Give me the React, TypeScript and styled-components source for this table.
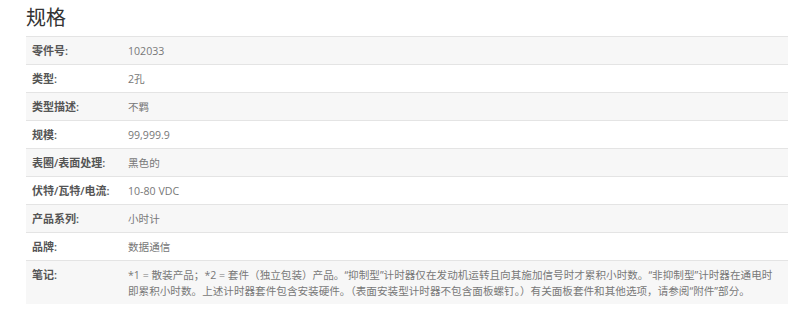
import React from 'react'
import styled, { createGlobalStyle } from 'styled-components'

const GlobalStyle = createGlobalStyle`
	body {
		margin: 0;
		background: #ffffff;
		font-family: 'Open Sans', 'Noto Sans CJK SC', sans-serif;
	}
`

const specs: [string, string][] = [
	['零件号:', '102033'],
	['类型:', '2孔'],
	['类型描述:', '不羁'],
	['规模:', '99,999.9'],
	['表圈/表面处理:', '黑色的'],
	['伏特/瓦特/电流:', '10-80 VDC'],
	['产品系列:', '小时计'],
	['品牌:', '数据通信'],
	[
		'笔记:',
		'*1 = 散装产品；*2 = 套件（独立包装）产品。“抑制型”计时器仅在发动机运转且向其施加信号时才累积小时数。“非抑制型”计时器在通电时即累积小时数。上述计时器套件包含安装硬件。（表面安装型计时器不包含面板螺钉。）有关面板套件和其他选项，请参阅“附件”部分。',
	],
]

const App = () => {
	return (
		<Root>
			<GlobalStyle />
			<Title>规格</Title>
			<SpecTable>
				<tbody>
					{specs.map(([label, value], i) => (
						<SpecRow key={label} striped={i % 2 === 0}>
							<LabelCell>{label}</LabelCell>
							<ValueCell>{value}</ValueCell>
						</SpecRow>
					))}
				</tbody>
			</SpecTable>
		</Root>
	)
}

export default App

const Root = styled.section`
	padding: 6px 12px 0 26px;
`

const Title = styled.h2`
	margin: 0 0 7px;
	font-weight: 400;
	font-size: 20px;
	line-height: 23px;
	color: #333333;
`

const SpecTable = styled.table`
	width: 762px;
	border-collapse: collapse;
	border-spacing: 0;
`

const SpecRow = styled.tr.withConfig({ shouldForwardProp: p => p !== 'striped' })<{ striped: boolean }>`
	background: ${p => (p.striped ? '#f7f7f7' : '#ffffff')};
	border-top: 1px solid #e4e4e4;
`

const LabelCell = styled.td`
	width: 90px;
	padding: 6px 6px 5px;
	vertical-align: top;
	font-weight: 600;
	font-size: 11px;
	line-height: 16px;
	color: #555555;
	white-space: nowrap;
`

const ValueCell = styled.td`
	padding: 6px 10px 5px 0;
	vertical-align: top;
	font-size: 10.6px;
	line-height: 16px;
	color: #777777;
`
